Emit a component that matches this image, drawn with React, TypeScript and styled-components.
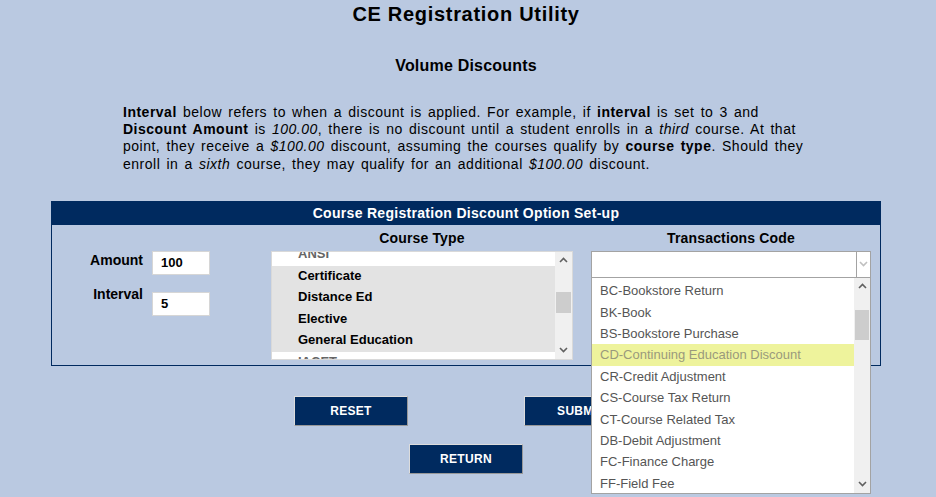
import React from "react";
import styled, { createGlobalStyle } from "styled-components";

const courseTypes = [
  { name: "ANSI", selected: false },
  { name: "Certificate", selected: true },
  { name: "Distance Ed", selected: true },
  { name: "Elective", selected: true },
  { name: "General Education", selected: true },
  { name: "IACET", selected: false },
];

const transactionCodes = [
  "BC-Bookstore Return",
  "BK-Book",
  "BS-Bookstore Purchase",
  "CD-Continuing Education Discount",
  "CR-Credit Adjustment",
  "CS-Course Tax Return",
  "CT-Course Related Tax",
  "DB-Debit Adjustment",
  "FC-Finance Charge",
  "FF-Field Fee",
];

const Chevron = ({ dir, color }: { dir: "up" | "down"; color: string }) => (
  <svg width="9" height="6" viewBox="0 0 9 6">
    <path
      d={dir === "up" ? "M1 5 L4.5 1.5 L8 5" : "M1 1 L4.5 4.5 L8 1"}
      fill="none"
      stroke={color}
      strokeWidth="1.6"
    />
  </svg>
);

const App = (): JSX.Element => {
  return (
    <>
      <GlobalStyle />
      <Page>
        <Title>CE Registration Utility</Title>
        <Subtitle>Volume Discounts</Subtitle>
        <Intro>
          <b>Interval</b> below refers to when a discount is applied. For
          example, if <b>interval</b> is set to 3 and
          <br />
          <b>Discount Amount</b> is <i>100.00</i>, there is no discount until a
          student enrolls in a <i>third</i> course. At that
          <br />
          point, they receive a <i>$100.00</i> discount, assuming the courses
          qualify by <b>course type</b>. Should they
          <br />
          enroll in a <i>sixth</i> course, they may qualify for an additional{" "}
          <i>$100.00</i> discount.
        </Intro>

        <Panel>
          <PanelHeader>Course Registration Discount Option Set-up</PanelHeader>
          <PanelBody>
            <FieldsColumn>
              <FieldRow>
                <FieldLabel $top={1}>Amount</FieldLabel>
                <TextInput defaultValue="100" $top={0} />
              </FieldRow>
              <FieldRow $gap={11}>
                <FieldLabel $top={0}>Interval</FieldLabel>
                <TextInput defaultValue="5" $top={6} />
              </FieldRow>
            </FieldsColumn>

            <ListColumn>
              <ColumnHeading>Course Type</ColumnHeading>
              <ListBox>
                <ListViewport>
                  <ListScroll $offset={-7.5}>
                    {courseTypes.map((c) => (
                      <CourseOption key={c.name} $selected={c.selected}>
                        {c.name}
                      </CourseOption>
                    ))}
                  </ListScroll>
                </ListViewport>
                <ScrollBar>
                  <ScrollArrow>
                    <Chevron dir="up" color="#606060" />
                  </ScrollArrow>
                  <ScrollThumb $top={23} $height={21} />
                  <ScrollSpacer />
                  <ScrollArrow>
                    <Chevron dir="down" color="#606060" />
                  </ScrollArrow>
                </ScrollBar>
              </ListBox>
            </ListColumn>

            <SelectColumn>
              <ColumnHeading>Transactions Code</ColumnHeading>
              <SelectWrap>
                <SelectBox>
                  <SelectValue />
                  <SelectArrow>
                    <Chevron dir="down" color="#c0c0c0" />
                  </SelectArrow>
                </SelectBox>
                <Dropdown>
                  <ListViewport>
                    <ListScroll $offset={2.4}>
                      {transactionCodes.map((t) => (
                        <CodeOption key={t} $active={t.startsWith("CD-")}>
                          {t}
                        </CodeOption>
                      ))}
                    </ListScroll>
                  </ListViewport>
                  <ScrollBar $width={16}>
                    <ScrollArrow>
                      <Chevron dir="up" color="#606060" />
                    </ScrollArrow>
                    <ScrollThumb $top={15} $height={30} />
                    <ScrollSpacer />
                    <ScrollArrow>
                      <Chevron dir="down" color="#606060" />
                    </ScrollArrow>
                  </ScrollBar>
                </Dropdown>
              </SelectWrap>
            </SelectColumn>
          </PanelBody>
        </Panel>

        <ButtonRow $top={30}>
          <ActionButton>RESET</ActionButton>
          <ActionButton>SUBMIT</ActionButton>
        </ButtonRow>
        <ButtonRow $top={18}>
          <ActionButton>RETURN</ActionButton>
        </ButtonRow>
      </Page>
    </>
  );
};

const GlobalStyle = createGlobalStyle`
  html, body {
    margin: 0;
    background: #bac9e1;
  }
  body {
    font-family: "Liberation Sans", Arial, sans-serif;
    color: #000;
    overflow: hidden;
  }
`;

const Page = styled.div`
  width: 830px;
  margin-left: 51px;
  padding-bottom: 20px;
`;

const Title = styled.h1`
  margin: 3px 0 0;
  font-size: 20px;
  line-height: 23px;
  font-weight: bold;
  letter-spacing: 0.7px;
  text-align: center;
`;

const Subtitle = styled.h2`
  margin: 31px 0 0;
  font-size: 16px;
  line-height: 18px;
  font-weight: bold;
  letter-spacing: 0.2px;
  text-align: center;
`;

const Intro = styled.p`
  width: 700px;
  margin: 29px 0 0 72px;
  font-size: 14px;
  line-height: 17.2px;
  letter-spacing: 0.5px;
  word-spacing: 1.8px;
  white-space: nowrap;
`;

const Panel = styled.section`
  margin-top: 28px;
  border: 1px solid #002a5f;
`;

const PanelHeader = styled.div`
  height: 23px;
  line-height: 23px;
  background: #002a5f;
  color: #fff;
  font-size: 14px;
  font-weight: bold;
  letter-spacing: 0.3px;
  text-align: center;
`;

const PanelBody = styled.div`
  display: flex;
  padding: 5px 0;
`;

const FieldsColumn = styled.div`
  width: 219px;
  padding-top: 21px;
`;

const FieldRow = styled.div<{ $gap?: number }>`
  display: flex;
  align-items: flex-start;
  gap: 9px;
  margin-top: ${(p) => p.$gap ?? 0}px;
`;

const FieldLabel = styled.label<{ $top: number }>`
  width: 91px;
  margin-top: ${(p) => p.$top}px;
  font-size: 14px;
  line-height: 17px;
  font-weight: bold;
  text-align: right;
`;

const TextInput = styled.input<{ $top: number }>`
  box-sizing: border-box;
  width: 58px;
  height: 24px;
  margin: ${(p) => p.$top}px 0 0;
  padding: 0 0 0 8px;
  border: 1px solid #d6d6d6;
  background: #fff;
  font-family: inherit;
  font-size: 13px;
  font-weight: bold;
  color: #000;
  outline: none;
`;

const ListColumn = styled.div`
  width: 302px;
  margin-right: 18px;
`;

const SelectColumn = styled.div`
  width: 280px;
`;

const ColumnHeading = styled.div`
  height: 17px;
  margin-bottom: 4px;
  font-size: 14px;
  line-height: 17px;
  font-weight: bold;
  letter-spacing: 0.15px;
  text-align: center;
`;

const ListBox = styled.div`
  box-sizing: border-box;
  display: flex;
  height: 109px;
  border: 1px solid #d9d9d9;
  background: #fff;
  overflow: hidden;
`;

const ListViewport = styled.div`
  flex: 1;
  overflow: hidden;
`;

const ListScroll = styled.div<{ $offset: number }>`
  margin-top: ${(p) => p.$offset}px;
`;

const CourseOption = styled.div<{ $selected: boolean }>`
  box-sizing: border-box;
  height: 21.5px;
  line-height: 19.5px;
  padding-left: 26px;
  font-size: 13px;
  font-weight: bold;
  white-space: nowrap;
  background: ${(p) => (p.$selected ? "#e3e3e3" : "#fff")};
  color: ${(p) => (p.$selected ? "#000" : "#666")};
`;

const ScrollBar = styled.div<{ $width?: number }>`
  display: flex;
  flex-direction: column;
  width: ${(p) => p.$width ?? 17}px;
  background: #f0f0f0;
`;

const ScrollArrow = styled.div`
  display: flex;
  align-items: center;
  justify-content: center;
  height: 17px;
`;

const ScrollThumb = styled.div<{ $top: number; $height: number }>`
  margin: ${(p) => p.$top}px 1px 0;
  height: ${(p) => p.$height}px;
  background: #cdcdcd;
`;

const ScrollSpacer = styled.div`
  flex: 1;
`;

const SelectWrap = styled.div`
  position: relative;
`;

const SelectBox = styled.div`
  box-sizing: border-box;
  display: flex;
  height: 27px;
  border: 1px solid #a3a3a3;
  background: #fff;
`;

const SelectValue = styled.div`
  flex: 1;
`;

const SelectArrow = styled.div`
  display: flex;
  align-items: center;
  justify-content: center;
  width: 13px;
  border-left: 1px solid #a3a3a3;
`;

const Dropdown = styled.div`
  position: absolute;
  top: 100%;
  left: 0;
  z-index: 10;
  box-sizing: border-box;
  display: flex;
  width: 280px;
  height: 216px;
  border: 1px solid #a3a3a3;
  border-top: none;
  background: #fff;
  overflow: hidden;
`;

const CodeOption = styled.div<{ $active: boolean }>`
  height: 21.4px;
  line-height: 21.4px;
  padding-left: 8px;
  font-size: 13px;
  white-space: nowrap;
  background: ${(p) => (p.$active ? "#eef39c" : "#fff")};
  color: ${(p) => (p.$active ? "#9a9a7c" : "#555")};
`;

const ButtonRow = styled.div<{ $top: number }>`
  display: flex;
  justify-content: center;
  gap: 116px;
  margin-top: ${(p) => p.$top}px;
`;

const ActionButton = styled.button`
  box-sizing: border-box;
  width: 114px;
  height: 30px;
  padding: 0;
  border: 1px solid;
  border-color: #dcdcdc #989898 #989898 #dcdcdc;
  background: #002a5f;
  color: #fff;
  font-family: inherit;
  font-size: 12px;
  font-weight: bold;
  letter-spacing: 0.3px;
  cursor: pointer;
`;

export default App;
